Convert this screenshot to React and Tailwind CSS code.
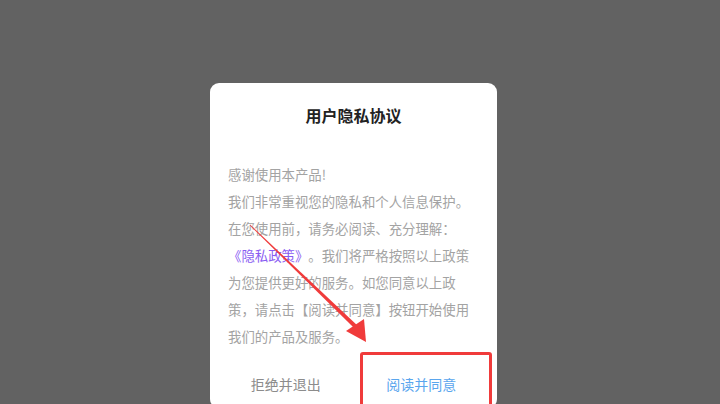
import React from 'react'

const lines = [
  '感谢使用本产品!',
  '我们非常重视您的隐私和个人信息保护。',
  '在您使用前，请务必阅读、充分理解：',
  null,
  '为您提供更好的服务。如您同意以上政',
  '策，请点击【阅读并同意】按钮开始使用',
  '我们的产品及服务。',
]

const PrivacyDialog = () => {
  return (
    <div className="w-[287px] rounded-[9px] bg-white">
      <div className="pt-5 text-center text-[16px] leading-6 font-bold text-[#222]">
        用户隐私协议
      </div>
      <div className="mt-[34px] px-[18px] text-[13.4px] leading-[27px] text-[#a3a3a3] [text-spacing-trim:space-all]">
        {lines.map((line, i) =>
          line === null ? (
            <div key={i} className="whitespace-nowrap">
              <span className="text-[#8a5cf2]">《隐私政策》</span>。我们将严格按照以上政策
            </div>
          ) : (
            <div key={i} className="whitespace-nowrap">{line}</div>
          )
        )}
      </div>
      <div className="mt-[10px] flex px-2 text-[14px]">
        <button className="flex-1 h-12 text-[#8c8c8c]">拒绝并退出</button>
        <button className="flex-1 h-12 text-[#5aa6ee]">阅读并同意</button>
      </div>
    </div>
  )
}

export default function App() {
  return (
    <div
      className="relative h-[404px] w-[720px] overflow-hidden bg-[#626262]"
      style={{ fontFamily: '"Noto Sans CJK SC", "Noto Sans", sans-serif' }}
    >
      <div className="flex pl-[210px] pt-[83px]">
        <PrivacyDialog />
      </div>

      {/* annotation: red box around the agree button */}
      <div className="absolute left-[360px] top-[352px] h-[70px] w-[132px] rounded-[3px] border-[3px] border-[#f03b3b]" />

      {/* annotation: red arrow */}
      <svg className="absolute inset-0" width="720" height="404" viewBox="0 0 720 404">
        <polygon
          points="249.7,225.3 250.3,224.7 357.4,325.6 354.6,328.4"
          fill="#f03b3b"
        />
        <polygon points="366,342 346,331 364,319" fill="#f03b3b" />
      </svg>
    </div>
  )
}
